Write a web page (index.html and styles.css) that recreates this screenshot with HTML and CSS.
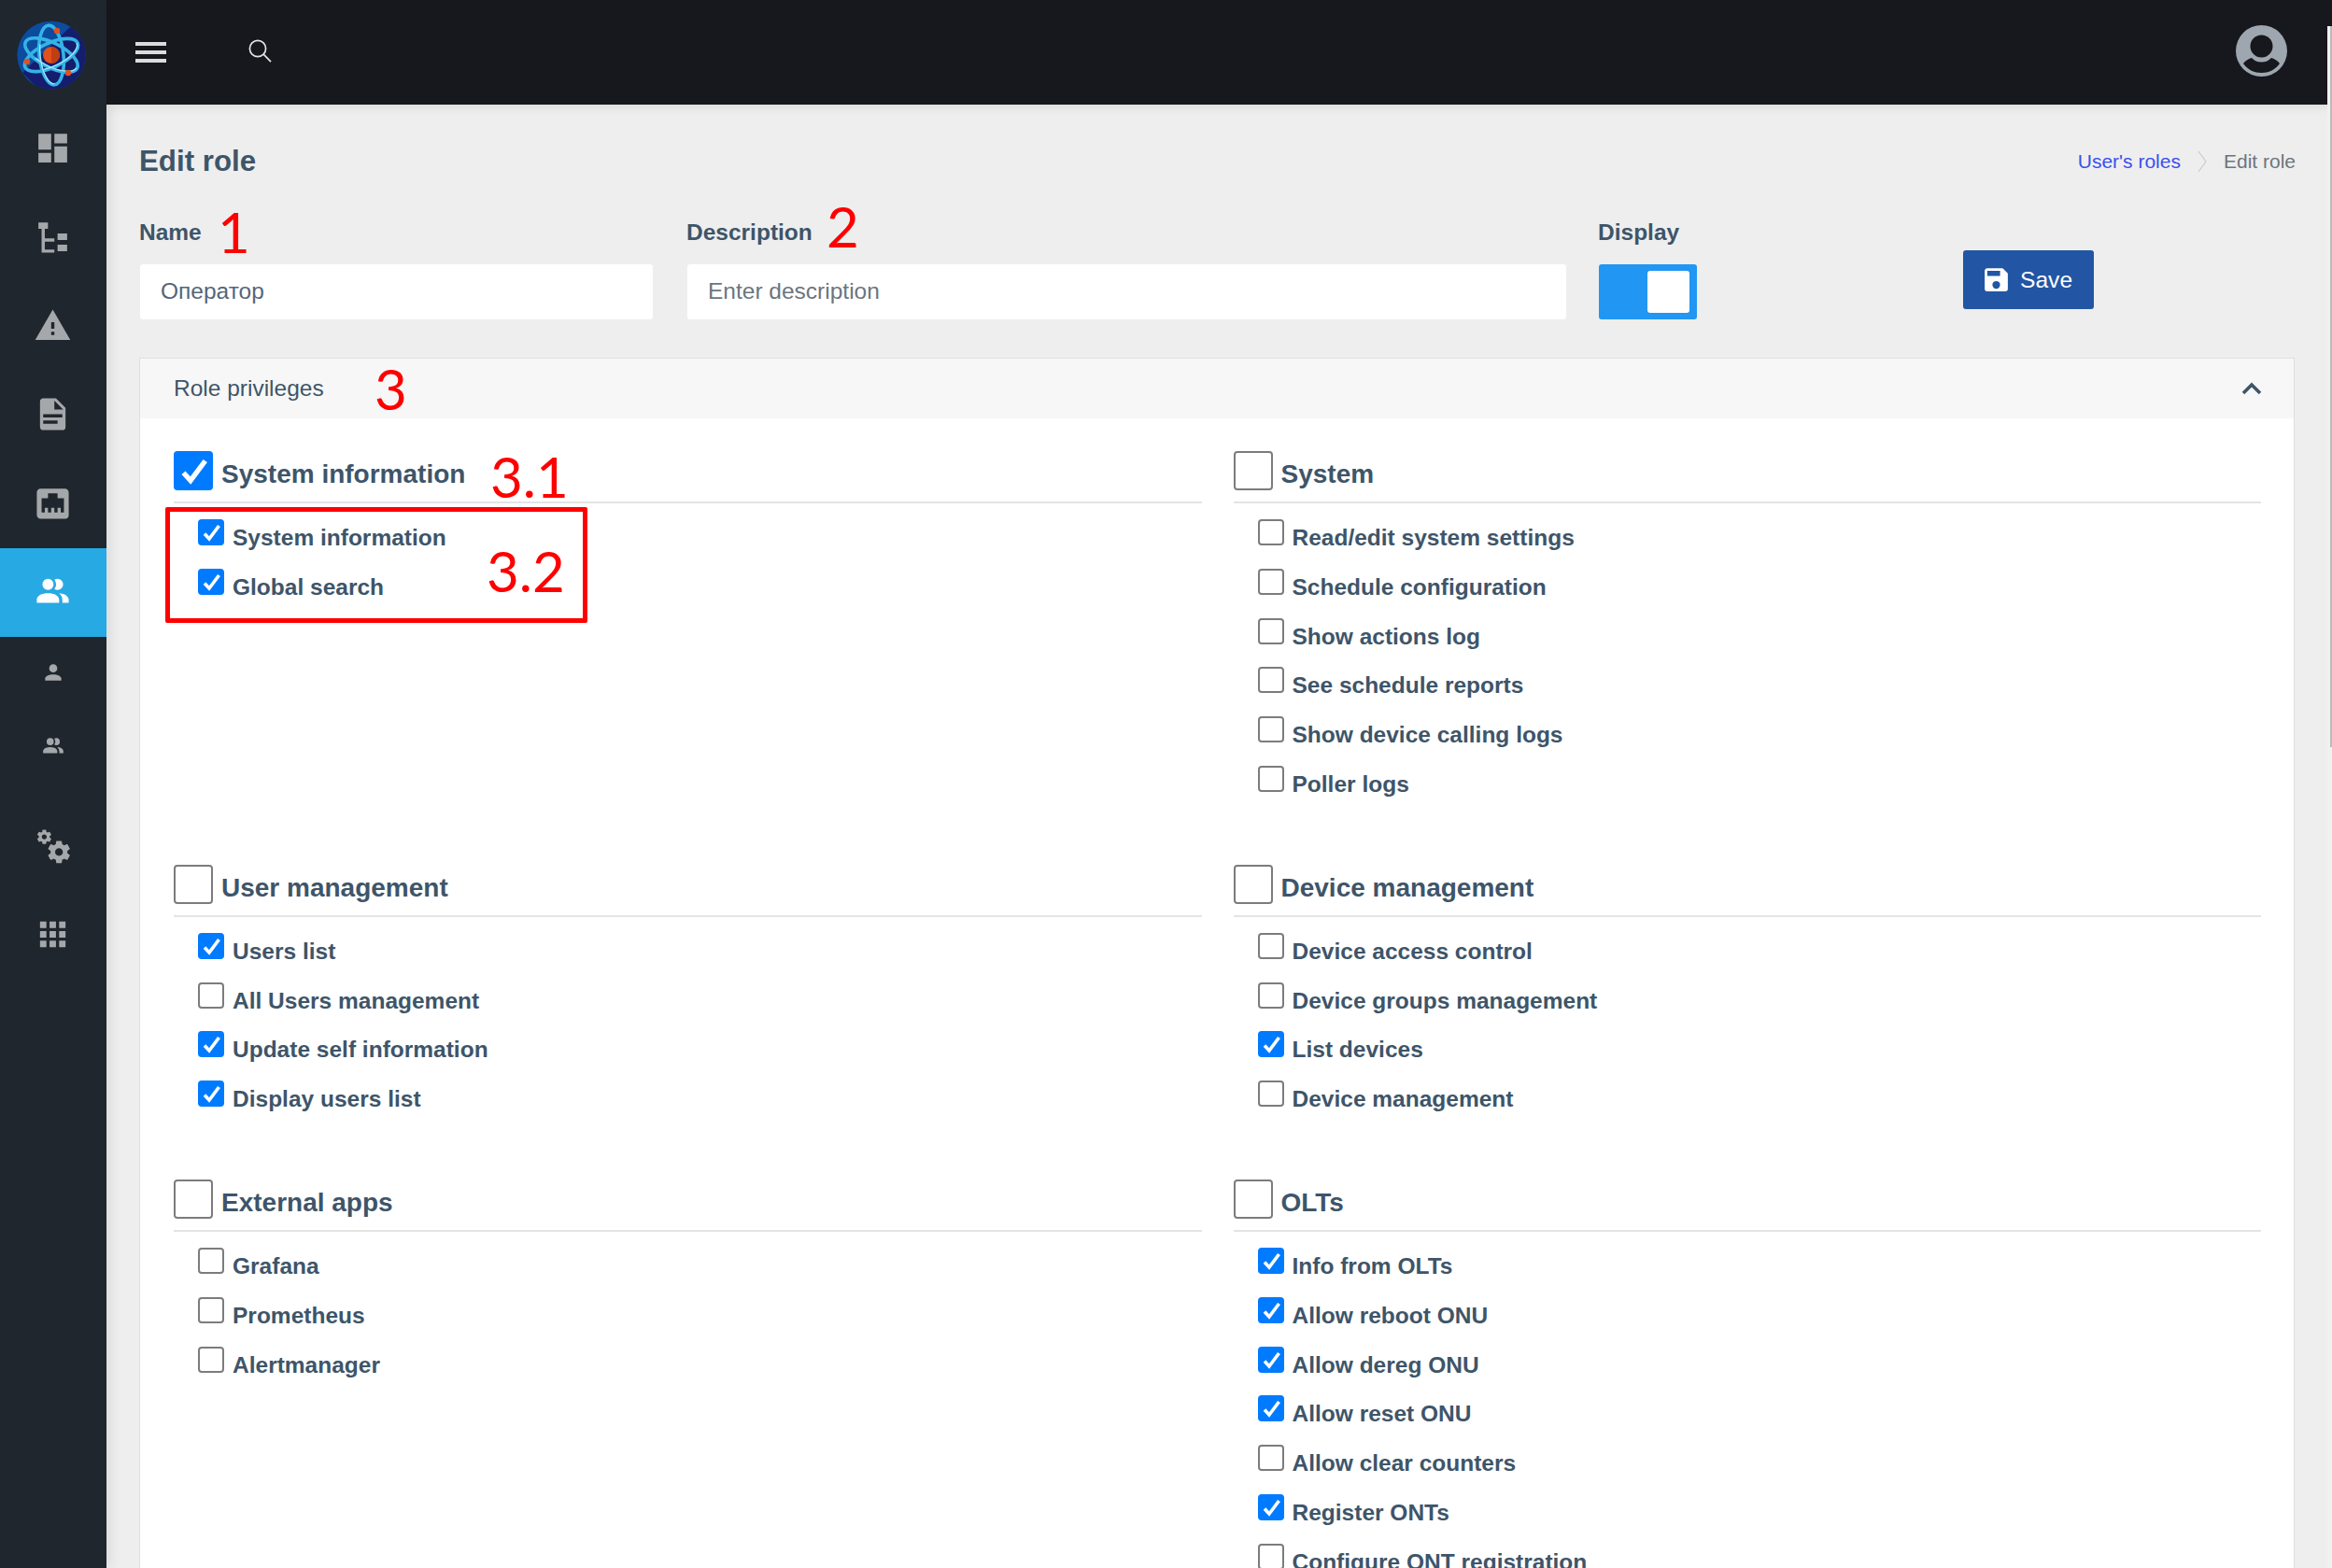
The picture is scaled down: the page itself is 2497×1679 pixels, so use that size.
FILE: index.html
```html
<!DOCTYPE html>
<html lang="en">
  <head>
    <meta charset="utf-8">
    <title>Edit role</title>
    <link rel="stylesheet" href="styles.css">
  </head>
  <body>
    <div class="app">
      <!-- left icon rail -->
      <aside class="sidebar">
        <div class="logo">
          <svg width="74" height="74" viewBox="0 0 74 74">
            <defs><clipPath id="disc"><circle cx="37" cy="37" r="36.6"/></clipPath></defs>
            <circle cx="37" cy="37" r="36.6" fill="#0b4c9f"/>
            <polygon points="58,6 76,24 76,76 26,76 6,56" fill="#151d6e" clip-path="url(#disc)"/>
            <g fill="none" stroke="#35b3e6" stroke-width="3.6">
              <ellipse cx="37" cy="37" rx="32" ry="13" transform="rotate(84 37 37)"/>
              <ellipse cx="37" cy="37" rx="31" ry="13" transform="rotate(27 37 37)"/>
              <ellipse cx="37" cy="37" rx="31" ry="13" transform="rotate(-25 37 37)"/>
            </g>
            <g fill="none" stroke="#a9e6fb" stroke-width="1.2">
              <ellipse cx="37" cy="37" rx="31" ry="12" transform="rotate(84 37 37)" stroke-dasharray="48 150"/>
              <ellipse cx="37" cy="37" rx="30" ry="12" transform="rotate(27 37 37)" stroke-dasharray="48 150"/>
              <ellipse cx="37" cy="37" rx="30" ry="12" transform="rotate(-25 37 37)" stroke-dasharray="48 150"/>
            </g>
            <circle cx="37" cy="37" r="9" fill="#e2501c"/>
            <path d="M37 28a9 9 0 0 1 0 18z" fill="#bf3f12"/>
            <circle cx="43" cy="11" r="3.2" fill="#e2501c"/>
            <circle cx="11" cy="44" r="3.2" fill="#e2501c"/>
            <circle cx="55" cy="56" r="3.2" fill="#e2501c"/>
          </svg>
        </div>
        <nav class="rail">
          <a class="rail-item"><svg class="icon" viewBox="0 0 24 24"><path d="M13,3V9H21V3M13,21H21V11H13M3,21H11V15H3M3,13H11V3H3V13Z"/></svg></a>
          <a class="rail-item"><svg class="icon" viewBox="0 0 24 24"><path d="M3,3H9V7H3V3M15,10H21V14H15V10M15,17H21V21H15V17M13,13V15H7V20H13V22H7L5,22V7H7V13H13Z"/></svg></a>
          <a class="rail-item"><svg class="icon" viewBox="0 0 24 24"><path d="M13,14H11V10H13M13,18H11V16H13M1,21H23L12,2L1,21Z"/></svg></a>
          <a class="rail-item"><svg class="icon" viewBox="0 0 24 24"><path d="M13,9H18.5L13,3.5V9M6,2H14L20,8V20A2,2 0 0,1 18,22H6C4.89,22 4,21.1 4,20V4C4,2.89 4.89,2 6,2M15,18V16H6V18H15M18,14V12H6V14H18Z"/></svg></a>
          <a class="rail-item"><svg class="icon" viewBox="0 0 24 24"><path d="M7,15H9V18H11V15H13V18H15V15H17V18H19V9H15V6H9V9H5V18H7V15M4.38,3H19.63C20.94,3 22,4.06 22,5.38V19.63A2.37,2.37 0 0,1 19.63,22H4.38C3.06,22 2,20.94 2,19.63V5.38C2,4.06 3.06,3 4.38,3Z"/></svg></a>
          <a class="rail-item active"><svg class="icon" viewBox="0 0 24 24"><path d="M16 17V19H2V17S2 13 9 13 16 17 16 17M12.5 7.5A3.5 3.5 0 1 0 9 11A3.5 3.5 0 0 0 12.5 7.5M15.94 13A5.32 5.32 0 0 1 18 17V19H22V17S22 13.37 15.94 13M15 4A3.39 3.39 0 0 0 13.07 4.59A5 5 0 0 1 13.07 10.41A3.39 3.39 0 0 0 15 11A3.5 3.5 0 0 0 15 4Z"/></svg></a>
          <a class="rail-sub"><svg class="icon-sm" viewBox="0 0 24 24"><path d="M12,4A4,4 0 0,1 16,8A4,4 0 0,1 12,12A4,4 0 0,1 8,8A4,4 0 0,1 12,4M12,14C16.42,14 20,15.79 20,18V20H4V18C4,15.79 7.58,14 12,14Z"/></svg></a>
          <a class="rail-sub last"><svg class="icon-sm" viewBox="0 0 24 24"><path d="M16 17V19H2V17S2 13 9 13 16 17 16 17M12.5 7.5A3.5 3.5 0 1 0 9 11A3.5 3.5 0 0 0 12.5 7.5M15.94 13A5.32 5.32 0 0 1 18 17V19H22V17S22 13.37 15.94 13M15 4A3.39 3.39 0 0 0 13.07 4.59A5 5 0 0 1 13.07 10.41A3.39 3.39 0 0 0 15 11A3.5 3.5 0 0 0 15 4Z"/></svg></a>
          <a class="rail-item"><svg class="icon" viewBox="0 0 24 24"><path d="M15.9,18.45C17.25,18.45 18.35,17.35 18.35,16C18.35,14.65 17.25,13.55 15.9,13.55C14.54,13.55 13.45,14.65 13.45,16C13.45,17.35 14.54,18.45 15.9,18.45M21.1,16.68L22.58,17.84C22.71,17.95 22.75,18.13 22.66,18.29L21.26,20.71C21.17,20.86 21,20.92 20.83,20.86L19.09,20.16C18.73,20.44 18.33,20.67 17.91,20.85L17.64,22.7C17.62,22.87 17.47,23 17.3,23H14.5C14.32,23 14.18,22.87 14.15,22.7L13.89,20.85C13.46,20.67 13.07,20.44 12.71,20.16L10.96,20.86C10.81,20.92 10.62,20.86 10.54,20.71L9.14,18.29C9.05,18.13 9.09,17.95 9.22,17.84L10.7,16.68L10.65,16L10.7,15.31L9.22,14.16C9.09,14.05 9.05,13.86 9.14,13.71L10.54,11.29C10.62,11.13 10.81,11.07 10.96,11.13L12.71,11.84C13.07,11.56 13.46,11.32 13.89,11.15L14.15,9.29C14.18,9.13 14.32,9 14.5,9H17.3C17.47,9 17.62,9.13 17.64,9.29L17.91,11.15C18.33,11.32 18.73,11.56 19.09,11.84L20.83,11.13C21,11.07 21.17,11.13 21.26,11.29L22.66,13.71C22.75,13.86 22.71,14.05 22.58,14.16L21.1,15.31L21.15,16L21.1,16.68M6.69,8.07C7.56,8.07 8.26,7.37 8.26,6.5C8.26,5.63 7.56,4.92 6.69,4.92A1.58,1.58 0 0,0 5.11,6.5C5.11,7.37 5.82,8.07 6.69,8.07M10.03,6.94L11,7.68C11.07,7.75 11.1,7.87 11.03,7.97L10.13,9.53C10.08,9.63 9.96,9.67 9.86,9.63L8.74,9.18L8,9.62L7.81,10.81C7.79,10.92 7.7,11 7.59,11H5.79C5.67,11 5.58,10.92 5.56,10.81L5.4,9.62L4.64,9.18L3.5,9.63C3.41,9.67 3.3,9.63 3.24,9.53L2.34,7.97C2.28,7.87 2.31,7.75 2.39,7.68L3.34,6.94L3.31,6.5L3.34,6.06L2.39,5.32C2.31,5.25 2.28,5.13 2.34,5.03L3.24,3.47C3.3,3.37 3.41,3.33 3.5,3.37L4.63,3.82L5.4,3.38L5.56,2.19C5.58,2.08 5.67,2 5.79,2H7.59C7.7,2 7.79,2.08 7.81,2.19L8,3.38L8.74,3.82L9.86,3.37C9.96,3.33 10.08,3.37 10.13,3.47L11.03,5.03C11.1,5.13 11.07,5.25 11,5.32L10.03,6.06L10.06,6.5L10.03,6.94Z"/></svg></a>
          <a class="rail-item"><svg class="icon" viewBox="0 0 24 24"><path d="M16,20H20V16H16M16,14H20V10H16M10,8H14V4H10M16,8H20V4H16M10,14H14V10H10M4,14H8V10H4M4,20H8V16H4M10,20H14V16H10M4,8H8V4H4V8Z"/></svg></a>
        </nav>
      </aside>

      <div class="main">
        <header class="topbar">
          <button class="burger"><span></span><span></span><span></span></button>
          <svg class="search" viewBox="0 0 25 25"><circle cx="10" cy="10" r="8.6"/><path d="M16.2 16.2L24 24.2"/></svg>
          <svg class="avatar" viewBox="0 0 55 55">
            <circle cx="27.5" cy="27.5" r="27.5" fill="#9ea6af"/>
            <circle cx="27.5" cy="22.5" r="12" fill="#16181d"/>
            <path d="M8 41C11 37 14 36 17 35C20 38 23 39.500 27.500 39.500C32 39.500 35 38 38 35C41 36 44 37 47 41C42 48 35 51 27.500 51C20 51 13 48 8 41Z" fill="#16181d"/>
          </svg>
        </header>

        <main class="content">
          <div class="title-row">
            <h1 class="page-title">Edit role</h1>
            <div class="crumbs">
              <a class="crumb-link">User's roles</a>
              <svg class="crumb-sep" viewBox="0 0 10 24"><path d="M1 1L9 12L1 23"/></svg>
              <span class="crumb-here">Edit role</span>
            </div>
          </div>

          <form class="role-form">
            <div class="field field-name">
              <label class="field-label">Name</label>
              <input class="text-input" type="text" value="Оператор">
            </div>
            <div class="field field-desc">
              <label class="field-label">Description</label>
              <input class="text-input" type="text" placeholder="Enter description">
            </div>
            <div class="field field-display">
              <label class="field-label">Display</label>
              <div class="toggle"><span class="toggle-knob"></span></div>
            </div>
            <button class="save-btn" type="button">
              <svg viewBox="0 0 24 24"><path d="M15,9H5V5H15M12,19A3,3 0 0,1 9,16A3,3 0 0,1 12,13A3,3 0 0,1 15,16A3,3 0 0,1 12,19M17,3H5C3.89,3 3,3.9 3,5V19A2,2 0 0,0 5,21H19A2,2 0 0,0 21,19V7L17,3Z"/></svg>
              Save
            </button>
          </form>

          <section class="card">
            <div class="card-head">
              <span>Role privileges</span>
              <svg class="chevron" viewBox="0 0 22 14"><path d="M2 12L11 3L20 12"/></svg>
            </div>
            <div class="card-body">
              <div class="group">
                <label class="group-head"><input class="cb-lg" type="checkbox" checked><span>System information</span></label>
                <label class="perm"><input class="cb" type="checkbox" checked><span>System information</span></label>
                <label class="perm"><input class="cb" type="checkbox" checked><span>Global search</span></label>
              </div>
              <div class="group">
                <label class="group-head"><input class="cb-lg" type="checkbox"><span>System</span></label>
                <label class="perm"><input class="cb" type="checkbox"><span>Read/edit system settings</span></label>
                <label class="perm"><input class="cb" type="checkbox"><span>Schedule configuration</span></label>
                <label class="perm"><input class="cb" type="checkbox"><span>Show actions log</span></label>
                <label class="perm"><input class="cb" type="checkbox"><span>See schedule reports</span></label>
                <label class="perm"><input class="cb" type="checkbox"><span>Show device calling logs</span></label>
                <label class="perm"><input class="cb" type="checkbox"><span>Poller logs</span></label>
              </div>
              <div class="group">
                <label class="group-head"><input class="cb-lg" type="checkbox"><span>User management</span></label>
                <label class="perm"><input class="cb" type="checkbox" checked><span>Users list</span></label>
                <label class="perm"><input class="cb" type="checkbox"><span>All Users management</span></label>
                <label class="perm"><input class="cb" type="checkbox" checked><span>Update self information</span></label>
                <label class="perm"><input class="cb" type="checkbox" checked><span>Display users list</span></label>
              </div>
              <div class="group">
                <label class="group-head"><input class="cb-lg" type="checkbox"><span>Device management</span></label>
                <label class="perm"><input class="cb" type="checkbox"><span>Device access control</span></label>
                <label class="perm"><input class="cb" type="checkbox"><span>Device groups management</span></label>
                <label class="perm"><input class="cb" type="checkbox" checked><span>List devices</span></label>
                <label class="perm"><input class="cb" type="checkbox"><span>Device management</span></label>
              </div>
              <div class="group">
                <label class="group-head"><input class="cb-lg" type="checkbox"><span>External apps</span></label>
                <label class="perm"><input class="cb" type="checkbox"><span>Grafana</span></label>
                <label class="perm"><input class="cb" type="checkbox"><span>Prometheus</span></label>
                <label class="perm"><input class="cb" type="checkbox"><span>Alertmanager</span></label>
              </div>
              <div class="group">
                <label class="group-head"><input class="cb-lg" type="checkbox"><span>OLTs</span></label>
                <label class="perm"><input class="cb" type="checkbox" checked><span>Info from OLTs</span></label>
                <label class="perm"><input class="cb" type="checkbox" checked><span>Allow reboot ONU</span></label>
                <label class="perm"><input class="cb" type="checkbox" checked><span>Allow dereg ONU</span></label>
                <label class="perm"><input class="cb" type="checkbox" checked><span>Allow reset ONU</span></label>
                <label class="perm"><input class="cb" type="checkbox"><span>Allow clear counters</span></label>
                <label class="perm"><input class="cb" type="checkbox" checked><span>Register ONTs</span></label>
                <label class="perm"><input class="cb" type="checkbox"><span>Configure ONT registration</span></label>
              </div>
            </div>
          </section>
        </main>
      </div>

      <!-- red annotations drawn over the screenshot -->
      <span class="note note-1">1</span>
      <span class="note note-2">2</span>
      <span class="note note-3">3</span>
      <span class="note note-31">3.1</span>
      <span class="note note-32">3.2</span>
      <div class="note-box"></div>

      <div class="scrollbar"><div class="scrollbar-thumb"></div></div>
    </div>
  </body>
</html>
```

FILE: styles.css
```css
* {
  box-sizing: border-box;
}
html, body {
  margin: 0;
  padding: 0;
  background-color: #eeeeee;
  color: #3e5569;
  font-family: "Liberation Sans", Arial, sans-serif;
}

.app {
  position: relative;
  display: flex;
  width: 2497px;
  height: 1679px;
  overflow: hidden;
}

/* sidebar */
.sidebar {
  position: relative;
  z-index: 2;
  flex: 0 0 114px;
  background-color: #1f262d;
  box-shadow: 1px 0 14px rgba(0, 0, 0, 0.12);
}
.logo {
  display: flex;
  justify-content: center;
  height: 112px;
  padding-top: 22px;
  padding-right: 4px;
}
.rail {
  display: flex;
  flex-direction: column;
}
.rail-item {
  display: flex;
  align-items: center;
  justify-content: center;
  height: 95px;
}
.rail-item.active {
  background-color: #27a9e3;
}
.rail-sub {
  display: flex;
  align-items: center;
  justify-content: center;
  height: 79px;
}
.rail-sub.last {
  margin-bottom: 19px;
}
.icon {
  width: 41px;
  height: 41px;
  margin: -3px 1px 0 0;
  fill: #a5a8ab;
}
.icon-sm {
  width: 26px;
  height: 26px;
  margin-top: -3px;
  fill: #a5a8ab;
}
.active .icon {
  fill: #ffffff;
}

/* top bar */
.main {
  flex: 1;
  min-width: 0;
  display: flex;
  flex-direction: column;
}
.topbar {
  position: relative;
  z-index: 1;
  display: flex;
  align-items: center;
  flex: 0 0 112px;
  padding: 0 48px 0 31px;
  background-color: #16181d;
  box-shadow: 0 1px 12px rgba(0, 0, 0, 0.1);
}
.burger {
  display: flex;
  flex-direction: column;
  gap: 5px;
  width: 33px;
  padding: 0;
  border: 0;
  background: none;
}
.burger span {
  display: block;
  height: 4px;
  background-color: #dcdcdc;
}
.search {
  width: 25px;
  height: 25px;
  margin-left: 88px;
  margin-top: -3px;
  fill: none;
  stroke: #e4e4e4;
  stroke-width: 1.7;
}
.avatar {
  width: 55px;
  height: 55px;
  margin-left: auto;
  margin-top: -3px;
}

/* page */
.content {
  padding: 0 40px 0 36px;
}
.title-row {
  display: flex;
  align-items: center;
  justify-content: space-between;
  height: 118px;
  padding-top: 3px;
}
.page-title {
  margin: 0 0 0 -1px;
  font-size: 31.3px;
  font-weight: bold;
}
.crumbs {
  display: flex;
  align-items: center;
  gap: 18px;
  margin-right: -1px;
  font-size: 21px;
}
.crumb-link {
  color: #3a50f0;
}
.crumb-sep {
  width: 10px;
  height: 24px;
  fill: none;
  stroke: #c8ccd0;
  stroke-width: 1.2;
}
.crumb-here {
  color: #6c757d;
}

.role-form {
  display: flex;
  align-items: flex-start;
}
.field-label {
  display: block;
  height: 36px;
  margin: 0 0 17px -1px;
  font-size: 24.5px;
  font-weight: bold;
  line-height: 37px;
}
.field-name {
  width: 549px;
  margin-right: 37px;
}
.field-desc {
  width: 941px;
  margin-right: 35px;
}
.field-display {
  width: 105px;
  margin-right: 285px;
}
.text-input {
  display: block;
  width: 100%;
  height: 59px;
  padding: 0 22px 1px;
  border: 0;
  border-radius: 3px;
  background-color: #ffffff;
  color: #54667a;
  font: 24.5px "Liberation Sans", Arial, sans-serif;
}
.text-input::placeholder {
  color: #6c757d;
  opacity: 1;
}
.toggle {
  display: flex;
  justify-content: flex-end;
  width: 105px;
  height: 59px;
  padding: 7px 8px;
  border-radius: 3px;
  background-color: #2196f3;
}
.toggle-knob {
  width: 45px;
  border-radius: 3px;
  background-color: #ffffff;
}
.save-btn {
  display: flex;
  align-items: center;
  gap: 9px;
  width: 140px;
  height: 63px;
  margin-top: 38px;
  padding: 0 0 0 19px;
  border: 0;
  border-radius: 3px;
  background-color: #2255a4;
  color: #ffffff;
  font: 24.6px "Liberation Sans", Arial, sans-serif;
}
.save-btn svg {
  width: 33px;
  height: 33px;
  fill: #ffffff;
}

/* privileges card */
.card {
  margin: 41px 0 0 -1px;
  border: 1px solid #dfdfdf;
  border-bottom: 0;
  background-color: #ffffff;
}
.card-head {
  display: flex;
  align-items: center;
  justify-content: space-between;
  height: 64px;
  padding: 0 34px 0 36px;
  background-color: #f7f7f7;
  font-size: 24.5px;
}
.chevron {
  width: 22px;
  height: 14px;
  fill: none;
  stroke: #3e5569;
  stroke-width: 3.6;
}
.card-body {
  display: grid;
  grid-template-columns: 1fr 1fr;
  column-gap: 34px;
  row-gap: 53px;
  padding: 35px 35px 0 36px;
}
.group-head {
  display: flex;
  align-items: flex-start;
  gap: 9px;
  height: 56px;
  margin-bottom: 17px;
  border-bottom: 2px solid #e4e4e4;
  font-size: 28px;
  font-weight: bold;
  line-height: 32px;
}
.group-head span {
  padding-top: 9px;
}
.perm {
  display: flex;
  align-items: flex-start;
  gap: 9px;
  height: 52.8px;
  padding-left: 26px;
  font-size: 24.5px;
  font-weight: bold;
  line-height: 28px;
}
.perm span {
  margin-top: 6px;
}
.cb, .cb-lg {
  flex: none;
  appearance: none;
  margin: 0;
  border: 2px solid #7c7c7c;
  border-radius: 4px;
  background-color: #ffffff;
}
.cb {
  width: 28px;
  height: 28px;
}
.cb-lg {
  width: 42px;
  height: 42px;
}
.cb:checked, .cb-lg:checked {
  border: 0;
  background: #007bff url("data:image/svg+xml,%3Csvg xmlns='http://www.w3.org/2000/svg' viewBox='0 0 28 28'%3E%3Cpath d='M7 15.500L12 21L22.500 7' fill='none' stroke='%23fff' stroke-width='3.600'/%3E%3C/svg%3E") center / 100% 100% no-repeat;
}

/* annotations */
.note {
  position: absolute;
  color: #ff0000;
  font-family: Lato, "Liberation Sans", sans-serif;
  font-size: 60px;
  line-height: 1;
}
.note-1 {
  left: 233px;
  top: 218px;
}
.note-2 {
  left: 885px;
  top: 212px;
}
.note-3 {
  left: 401px;
  top: 386px;
}
.note-31 {
  left: 525px;
  top: 480px;
}
.note-32 {
  left: 521px;
  top: 581px;
}
.note-box {
  position: absolute;
  left: 177px;
  top: 543px;
  width: 452px;
  height: 124px;
  border: 5px solid #ff0000;
  border-radius: 2px;
}
.scrollbar {
  position: absolute;
  top: 28px;
  right: 0;
  bottom: 0;
  z-index: 3;
  width: 5px;
  background-color: #f1f1f1;
}
.scrollbar-thumb {
  width: 2px;
  height: 772px;
  margin-left: 3px;
  background-color: #bbbbbb;
}
```
